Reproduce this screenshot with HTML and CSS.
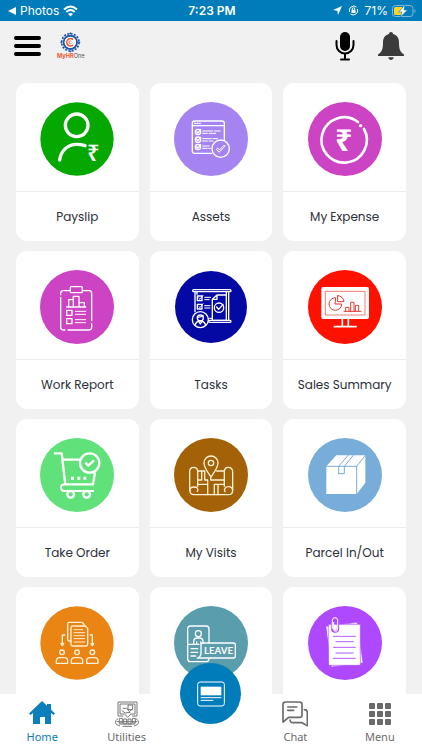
FILE: index.html
```html
<!DOCTYPE html>
<html lang="en">
<head>
    <meta charset="UTF-8">
    <meta name="viewport" content="width=device-width, initial-scale=1.0">
    <title>MyHROne</title>
    <link rel="stylesheet" href="styles.css">
</head>
<body>
    <div class="status-bar">
        <div class="status-left">
            <svg width="8" height="8" viewBox="0 0 8 8"><path d="M8 0v8L0 4z" fill="#fff"/></svg>
            <span>Photos</span>
            <svg width="15" height="12" viewBox="0 0 15 12" fill="none" stroke="#fff" stroke-width="2"><path d="M1 4.500Q7.500-1.500 14 4.500M3.300 7Q7.500 3 11.700 7"/><path d="M7.500 11.500 5 9q2.500-2 5 0z" fill="#fff" stroke="none"/></svg>
        </div>
        <div class="status-time">7:23 PM</div>
        <div class="status-right">
            <svg width="9" height="9" viewBox="0 0 9 9"><path d="M9 0 5 9 4.300 4.700 0 4z" fill="#fff"/></svg>
            <svg class="lock" width="11" height="11" viewBox="0 0 22 22" fill="none" stroke="#fff" stroke-width="2"><path d="M3 14A9 9 0 0 1 17 4M19 8A9 9 0 0 1 5 18"/><path d="M8.500 10V8a2.500 2.500 0 0 1 5 0v2"/><path d="M7 10h8v6H7z" fill="#fff" stroke="none"/></svg>
            <span>71%</span>
            <svg width="24" height="12" viewBox="0 0 24 12"><rect x=".5" y=".5" width="20.500" height="11" rx="3" fill="none" stroke="#7db9da"/><path d="M22.500 4q2 2 0 4z" fill="#7db9da"/><rect x="2" y="2" width="9" height="8" rx="1.500" fill="#ffd426"/><path d="M13 0 6.500 7H10L8.500 12 15.500 5H12z" fill="#fff" stroke="#007cba" stroke-width=".6"/></svg>
        </div>
    </div>

    <header class="header">
        <button class="icon-btn" aria-label="Open menu">
            <svg width="27" height="20" viewBox="0 0 27 20" stroke="#000" stroke-width="4" stroke-linecap="round"><path d="M2 2h23M2 10h23M2 18h23"/></svg>
        </button>
        <a class="logo" href="#" aria-label="MyHROne">
            <svg width="28" height="28" viewBox="0 0 84 84">
                <circle cx="40" cy="31" r="20" fill="none" stroke="#1f56a8" stroke-width="6"/>
                <circle cx="40" cy="31" r="26" fill="none" stroke="#1f56a8" stroke-width="5" stroke-dasharray="6 4.210"/>
                <path d="M40 0l4 6h-8zM40 62l4-6h-8zM9 31l6-4v8zM71 31l-6-4v8z" fill="#1f56a8"/>
                <circle cx="40" cy="31" r="17" fill="#fff"/>
                <path d="M48 23a11 11 0 1 0 0 16" fill="none" stroke="#ef5a32" stroke-width="5"/>
                <path d="M43 28a4 4 0 1 0 0 6" fill="none" stroke="#ef5a32" stroke-width="3"/>
                <text x="0" y="77" class="logo-text"><tspan class="logo-hr">MyHR</tspan>One</text>
            </svg>
        </a>
        <button class="icon-btn mic" aria-label="Voice search">
            <svg width="20" height="29" viewBox="0 0 20 29"><rect x="5" y="0" width="10" height="19" rx="5"/><path d="M1.500 9v4a8.500 8.500 0 0 0 17 0V9M10 22v5M6 27.500h8" fill="none" stroke="#000" stroke-width="2" stroke-linecap="round"/></svg>
        </button>
        <button class="icon-btn" aria-label="Notifications">
            <svg width="26" height="28" viewBox="0 0 26 28" fill="#3b3b3b"><path d="M13 0c1.200 0 2 .9 2 2 4.200 1 6 4.300 6 8.500C21 17 22 20 26 22.500V24H0v-1.500C4 20 5 17 5 10.500 5 6.300 6.800 3 11 2c0-1.100.8-2 2-2zM10.300 25.300h5.400c-.3 1.700-1.400 2.700-2.700 2.700s-2.400-1-2.700-2.700z"/></svg>
        </button>
    </header>

    <main class="content">
        <div class="grid">
            <a class="card" href="#">
                <span class="card-icon">
                    <svg class="art" viewBox="0 0 222 222">
                        <circle cx="111" cy="111" r="110" fill="#04a800" stroke="none"/>
                        <g stroke-width="10"><circle cx="110" cy="70" r="34"/><path d="M59 174C62 148 82 127 110 127q14 0 25 4"/></g>
                        <text x="141" y="176" class="rupee-small">₹</text>
                    </svg>
                </span>
                <span class="card-label">Payslip</span>
            </a>
            <a class="card" href="#">
                <span class="card-icon">
                    <svg class="art" viewBox="0 0 222 222">
                        <circle cx="111" cy="111" r="111" fill="#a584f2" stroke="none"/>
                        <g stroke-width="4">
                            <path d="M113 154H62q-7 0-7-7V64q0-7 7-7h82q7 0 7 7v50M55 71h96M62 64h3M69 64h3M76 64h3"/>
                            <circle cx="72" cy="90" r="8"/><circle cx="72" cy="113" r="8"/><circle cx="72" cy="135" r="8"/>
                            <path d="m68 89 4 4 8-10M68 112l4 4 8-10M68 134l4 4 8-10"/>
                            <path d="M86 87h30M121 87h18M86 94h14M105 94h20M86 110h26M117 110h14M86 117h14M105 117h12M86 132h20M86 139h14M104 139h6" stroke-width="3"/>
                            <circle cx="140" cy="140" r="26"/>
                            <path d="m128 141 3-3 5 6 15-15 3 3-18 18z" stroke-width="3"/>
                        </g>
                    </svg>
                </span>
                <span class="card-label">Assets</span>
            </a>
            <a class="card" href="#">
                <span class="card-icon">
                    <svg class="art" viewBox="0 0 222 222">
                        <circle cx="111" cy="111" r="111" fill="#cc43c4" stroke="none"/>
                        <path d="M150 60A68 68 0 1 0 168 81" stroke-width="8"/>
                        <circle cx="158" cy="71" r="5" fill="#fff" stroke="none"/>
                        <text x="81" y="147" class="rupee">₹</text>
                    </svg>
                </span>
                <span class="card-label">My Expense</span>
            </a>

            <a class="card" href="#">
                <span class="card-icon">
                    <svg class="art" viewBox="0 0 222 222">
                        <circle cx="111" cy="111" r="111" fill="#cc43c4" stroke="none"/>
                        <g stroke-width="4">
                            <path d="M62 74v-4q0-8 8-8h21M127 62h20q8 0 8 8v82M155 161v11q0 8-8 8H84M75 180h-5q-8 0-8-8V82"/>
                            <rect x="91" y="50" width="36" height="18" rx="3"/>
                            <path d="M80 111h57M86 111V89h14M100 111V79h17v32M117 98h16v13"/>
                            <path d="M80 121h16v15H80zM80 146h16v15H80z"/>
                            <path d="M106 124h31M106 133h31M106 149h31M106 158h31" stroke-width="3"/>
                        </g>
                    </svg>
                </span>
                <span class="card-label">Work Report</span>
            </a>
            <a class="card" href="#">
                <span class="card-icon">
                    <svg class="art" viewBox="0 0 222 222">
                        <circle cx="111" cy="111" r="108" fill="#0509a3" stroke="none"/>
                        <g stroke-width="4">
                            <rect x="56" y="59" width="115" height="6" rx="3"/>
                            <path d="M63 65v60M164 65v86M157 65v10M69 65v8"/>
                            <rect x="104" y="151" width="67" height="6" rx="3"/>
                            <path d="M70 78h14v14H70zM70 103h14v14H70z"/>
                            <path d="m74 84 4 4 9-12M74 109l4 4 9-12" stroke-width="3"/>
                            <path d="M92 82h18M92 89h14M92 107h16M92 114h16M104 145h10" stroke-width="3"/>
                            <path d="M115 88l14-13h28v76h-42zM129 75v13h-14"/>
                            <circle cx="135" cy="113" r="14"/><path d="m128 111 6 7 13-15"/>
                            <circle cx="79" cy="149" r="24"/><circle cx="79" cy="144" r="9"/>
                            <path d="M63 166c2-9 8-13 16-13s14 4 16 13M70 141q11 2 17-5M74 154l5 8 5-8"/>
                        </g>
                    </svg>
                </span>
                <span class="card-label">Tasks</span>
            </a>
            <a class="card" href="#">
                <span class="card-icon">
                    <svg class="art" viewBox="0 0 222 222">
                        <circle cx="111" cy="111" r="111" fill="#ff1100" stroke="none"/>
                        <rect x="40" y="51" width="143" height="96" rx="6" fill="#fff" stroke="none"/>
                        <g stroke="#e03d34" stroke-width="3">
                            <path d="M53 64h118v71H53z" stroke-width="2"/>
                            <path d="M82 83a19 19 0 1 0 19 19H82z"/>
                            <path d="M89 77v18h19a19 18 0 0 0-19-18z"/>
                            <path d="M108 124h51M113 124v-12h10v12M128 124V97h10v27M142 124v-18h10v18"/>
                        </g>
                        <path d="M103 147v20M121 147v20M79 170h65" stroke-width="5"/>
                    </svg>
                </span>
                <span class="card-label">Sales Summary</span>
            </a>

            <a class="card" href="#">
                <span class="card-icon">
                    <svg class="art" viewBox="0 0 222 222">
                        <circle cx="111" cy="111" r="111" fill="#60e17a" stroke="none"/>
                        <g stroke-width="7" stroke-linecap="butt">
                            <path d="M42 46h23l11 93h83l6-36M68 65h52"/>
                            <path d="M76 139c-18 0-16 20-3 20h89" stroke-width="6"/>
                            <circle cx="92" cy="169" r="10"/><circle cx="140" cy="169" r="10"/>
                            <circle cx="149" cy="75" r="29"/><path d="m136 74 9 9 17-16"/>
                            <path d="M93 121h9M112 121h9M130 121h9" stroke-width="9"/>
                        </g>
                    </svg>
                </span>
                <span class="card-label">Take Order</span>
            </a>
            <a class="card" href="#">
                <span class="card-icon">
                    <svg class="art" viewBox="0 0 222 222">
                        <circle cx="111" cy="111" r="111" fill="#a46208" stroke="none"/>
                        <g stroke="#fff1d6" stroke-width="4">
                            <path d="M47 158v-57q0-13 12-13t12 13v44"/>
                            <path d="M151 145v-44q0-13 12-13t13 13v57"/>
                            <path d="M58 147c-14 0-14 23 2 23h103c17 0 17-24 1-24-11 0-15 8-11 15M58 147c11-1 17 6 12 13"/>
                            <path d="M72 99h20M128 99h23M71 126h12v-27M71 139h30v31M101 139v-13h-9V99M121 170v-31h30M132 139v31M110 126h41M110 126v-11"/>
                            <path d="M111 117c-11-16-21-28-21-42a21 21 0 0 1 42 0c0 14-10 26-21 42z"/>
                            <circle cx="111" cy="75" r="8"/>
                        </g>
                    </svg>
                </span>
                <span class="card-label">My Visits</span>
            </a>
            <a class="card" href="#">
                <span class="card-icon">
                    <svg class="art" viewBox="0 0 222 222">
                        <circle cx="111" cy="111" r="111" fill="#79add9" stroke="none"/>
                        <path d="M55 85 85 52h87v82l-26 34H55z" fill="#fff" stroke="none"/>
                        <g stroke="#79add9" stroke-width="3">
                            <path d="M55 85h91l26-33M146 85v83"/>
                            <path d="M92 107V85l28-33M109 85l27-33M109 85v22H92"/>
                        </g>
                    </svg>
                </span>
                <span class="card-label">Parcel In/Out</span>
            </a>

            <a class="card" href="#" aria-label="Work allocation">
                <span class="card-icon">
                    <svg class="art" viewBox="0 0 222 222">
                        <circle cx="111" cy="111" r="110" fill="#ea8412" stroke="none"/>
                        <g stroke="#fff0d8" stroke-width="4">
                            <path d="M93 105h-5q-5 0-5-5V54q0-5 5-5h38l6 6v4"/>
                            <path d="M98 60h38l7 7v48q0 5-5 5H98q-5 0-5-5V65q0-5 5-5z"/>
                            <path d="M102 71h26M102 80h32M102 89h32M102 98h32M102 108h32" stroke-width="3"/>
                            <path d="M74 87h-7v28M150 87h7v28"/>
                            <path d="m63 113 4 6 4-6zM153 113l4 6 4-6z"/>
                            <circle cx="66" cy="139" r="7"/><circle cx="111" cy="139" r="7"/><circle cx="157" cy="139" r="7"/>
                            <path d="M49 172v-7q0-10 10-10h14q10 0 10 10v7zM94 172v-7q0-10 10-10h14q10 0 10 10v7zM140 172v-7q0-10 10-10h14q10 0 10 10v7z"/>
                        </g>
                    </svg>
                </span>
            </a>
            <a class="card" href="#">
                <span class="card-icon">
                    <svg class="art" viewBox="0 0 222 222">
                        <circle cx="111" cy="111" r="111" fill="#5a9dac" stroke="none"/>
                        <g stroke-width="4">
                            <path d="M105 111V69q0-9-9-9H50q-9 0-9 9v89q0 9 9 9h46q9 0 9-9M41 115h34"/>
                            <circle cx="73" cy="83" r="9"/>
                            <path d="M59 115v-8q0-11 11-11h6q11 0 11 11v4M68 115v-7M80 111v-3"/>
                            <path d="M51 128h20M51 139h20M51 150h14"/>
                            <path d="M87 111h91q6 0 6 6v33q0 6-6 6H70q11-5 11-13v-26q0-6 6-6z"/>
                        </g>
                        <text x="90" y="145" class="leave">LEAVE</text>
                    </svg>
                </span>
            </a>
            <a class="card" href="#" aria-label="Documents">
                <span class="card-icon">
                    <svg class="art" viewBox="0 0 222 222">
                        <circle cx="111" cy="111" r="111" fill="#af49ff" stroke="none"/>
                        <g fill="#fff" stroke="#af49ff" stroke-width="2">
                            <path d="m54 61 94-12 17 122-95 12z"/>
                            <path d="M62 55h95v123H62z"/>
                        </g>
                        <path d="M76 91h66M84 107h52M76 124h66M84 141h52M76 157h66" stroke="#b45cf7" stroke-width="3"/>
                        <rect x="73" y="36" width="17" height="41" rx="8" stroke="#af49ff" stroke-width="7"/>
                        <path d="M73 67V43q0-8 8-8t8 8v27q0 6-6 6t-6-6V49" stroke="#fff" stroke-width="3"/>
                    </svg>
                </span>
            </a>
        </div>
    </main>

    <nav class="bottom-nav">
        <a class="nav-item active" href="#">
            <svg width="26" height="24" viewBox="0 0 26 24" fill="#0a7fbb"><path d="M13 0 26 12.500l-1.500 1.500L22 12v11h-6v-7h-5v7H4V12l-2.500 2L0 12.500zM18 3h4v6l-4-4z"/></svg>
            <span>Home</span>
        </a>
        <a class="nav-item" href="#">
            <svg width="26" height="26" viewBox="0 0 78 78" fill="none" stroke="#777" stroke-width="3">
                <path d="M28 45H12V3h57v42H54M18 9h45v30H50M18 9v30h14M32 39l9 10 10-10M26 22h12l8 10 9-8M42 12h14v14H42zM23 28l10 8 16-2"/>
                <path d="M12 53C-1 60 3 72 18 75M66 53c13 7 9 19-6 22M8 62h62M14 69h50M26 76h28"/>
                <path d="M16 52h9v14h-9zM29 54h9v15h-9zM42 54h9v15h-9zM55 52h9v14h-9z"/>
            </svg>
            <span>Utilities</span>
        </a>
        <div class="nav-center">
            <button class="fab" aria-label="Card">
                <svg width="28" height="26" viewBox="0 0 84 76"><rect x="2" y="2" width="80" height="72" rx="7" fill="none" stroke="#fff" stroke-width="3"/><path d="M11 16h62v26H11z" fill="#fff"/><path d="M11 49h62M11 57h38" stroke="#fff" stroke-width="3"/></svg>
            </button>
        </div>
        <a class="nav-item" href="#">
            <svg width="26" height="26" viewBox="0 0 78 78" fill="none" stroke="#6b6b6b" stroke-width="5" stroke-linejoin="round" stroke-linecap="round"><path d="M10 3h43q7 0 7 7v32q0 7-7 7H20L3 63V10q0-7 7-7zM17 18h27M17 28h18M67 26q9 0 9 8v40L60 65H32q-7 0-8-8"/></svg>
            <span>Chat</span>
        </a>
        <a class="nav-item" href="#">
            <svg width="22" height="24" viewBox="0 0 22 24" fill="#6b6b6b"><rect y="2" width="6" height="6" rx="1"/><rect x="8" y="2" width="6" height="6" rx="1"/><rect x="16" y="2" width="6" height="6" rx="1"/><rect y="10" width="6" height="6" rx="1"/><rect x="8" y="10" width="6" height="6" rx="1"/><rect x="16" y="10" width="6" height="6" rx="1"/><rect y="18" width="6" height="6" rx="1"/><rect x="8" y="18" width="6" height="6" rx="1"/><rect x="16" y="18" width="6" height="6" rx="1"/></svg>
            <span>Menu</span>
        </a>
    </nav>
</body>
</html>
```
FILE: styles.css
```css
* {
    box-sizing: border-box;
}
body {
    margin: 0;
    height: 100vh;
    display: flex;
    flex-direction: column;
    overflow: hidden;
    background-color: #f1f1f1;
    color: #2b3039;
    font-family: Poppins, Inter, sans-serif;
}
a {
    color: inherit;
    text-decoration: none;
}
button {
    border: 0;
    padding: 0;
    background: none;
    cursor: pointer;
}
svg {
    display: block;
    flex-shrink: 0;
}

/* status bar */
.status-bar {
    display: grid;
    grid-template-columns: 1fr auto 1fr;
    align-items: center;
    height: 21px;
    padding: 0 6px 0 8px;
    background-color: #007cba;
    color: #fff;
    font-family: Inter, sans-serif;
    font-size: 12px;
    line-height: 21px;
}
.status-left, .status-right {
    display: flex;
    align-items: center;
    gap: 4px;
}
.status-right {
    justify-content: flex-end;
}
.status-right .lock {
    margin: 0 2px;
}
.status-time {
    font-weight: 600;
}

/* header */
.header {
    display: flex;
    align-items: center;
    height: 50px;
    padding: 0 18px 0 14px;
}
.logo {
    margin-left: 16px;
}
.logo-text {
    font-family: Inter, sans-serif;
    font-size: 17px;
    fill: #555;
}
.logo-hr {
    font-weight: 700;
    fill: #ef5a32;
}
.mic {
    margin-left: auto;
    margin-right: 23px;
}

/* cards */
.content {
    flex: 1;
    min-height: 0;
    overflow-y: auto;
    scrollbar-width: none;
    padding: 12px 16px;
}
.grid {
    display: grid;
    grid-template-columns: repeat(3, 1fr);
    gap: 10px 11px;
}
.card {
    display: block;
    min-height: 158px;
    background-color: #fff;
    border-radius: 11px;
}
.card-icon {
    display: flex;
    justify-content: center;
    padding: 19px 0 15px;
    border-bottom: 1px solid #ebebeb;
}
.card-label {
    display: block;
    padding: 15px 0 14px;
    font-size: 12px;
    line-height: 20px;
    text-align: center;
}
.art {
    width: 74px;
    height: 74px;
    fill: none;
    stroke: #fff;
    stroke-linecap: round;
    stroke-linejoin: round;
}
.rupee, .rupee-small, .leave {
    font-family: "Noto Sans", sans-serif;
    font-weight: 700;
    fill: #fff;
    stroke: none;
}
.rupee {
    font-size: 92px;
}
.rupee-small {
    font-size: 66px;
    font-weight: 600;
}
.leave {
    font-family: Lato, sans-serif;
    font-size: 29px;
}

/* bottom navigation */
.bottom-nav {
    position: relative;
    display: grid;
    grid-template-columns: repeat(5, 1fr);
    height: 56px;
    background-color: #fff;
    color: #6b6b6b;
    font-family: "Noto Sans", sans-serif;
    font-size: 11px;
    line-height: 16px;
}
.nav-item {
    display: flex;
    flex-direction: column;
    align-items: center;
    justify-content: space-between;
    padding: 7px 0 5px;
}
.nav-item.active {
    color: #0a7fbb;
}
.nav-center {
    display: flex;
    justify-content: center;
}
.fab {
    position: absolute;
    top: -31px;
    display: flex;
    align-items: center;
    justify-content: center;
    width: 61px;
    height: 61px;
    border-radius: 50%;
    background-color: #007cba;
}
```
